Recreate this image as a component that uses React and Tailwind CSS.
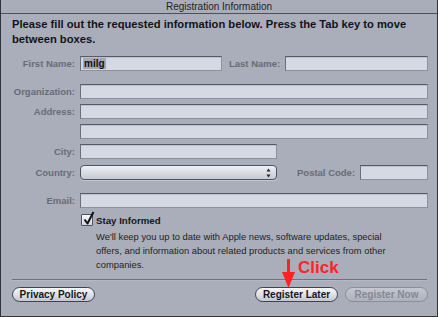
import React from "react";

const inputCls =
  "h-[15px] bg-[#d5d9e4] border border-[#8c909c] border-t-[#555969] border-l-[#6a6e7c] shadow-[inset_0_1px_0_#bcc0cb]";
const labelCls =
  "text-[9.5px] font-bold text-[#686b75] leading-[15px] whitespace-nowrap";

function Label({ children, className = "" }) {
  return <div className={`${labelCls} ${className}`}>{children}</div>;
}

function Row({ label, children, className = "" }) {
  return (
    <div className={`flex items-center ${className}`}>
      <Label className="w-[63px] text-right">{label}</Label>
      <div className="ml-[5px] flex flex-1 items-center">{children}</div>
    </div>
  );
}

export default function App() {
  return (
    <div className="relative w-[438px] h-[317px] overflow-hidden bg-[#aaaebb] border-x border-b border-[#30333d] font-['Liberation_Sans',Arial,sans-serif] text-[#111]">
      {/* title bar */}
      <div className="h-[14px] border-b border-[#4d505b] bg-[#a9adba] flex items-center justify-center text-[10px] leading-[13px] text-[#1e1f24]">
        Registration Information
      </div>

      <div className="pl-[11px] pr-[9px]">
        <div className="mt-[3px] text-[11.2px] font-bold leading-[15px] text-[#121318]">
          Please fill out the requested information below. Press the Tab key to move
          <br />
          between boxes.
        </div>

        {/* first/last name */}
        <div className="mt-[9px] flex items-center">
          <Label className="w-[63px] text-right">First Name:</Label>
          <div className={`${inputCls} ml-[5px] w-[142px] flex items-center pl-[2px]`}>
            <span className="bg-[#a3a8b8] text-[10px] font-bold leading-[11px] px-[1px] text-[#111]">milg</span>
          </div>
          <Label className="ml-[7px]">Last Name:</Label>
          <div className={`${inputCls} ml-[5px] flex-1`} />
        </div>

        <Row label="Organization:" className="mt-[13px]">
          <div className={`${inputCls} flex-1`} />
        </Row>
        <Row label="Address:" className="mt-[5px]">
          <div className={`${inputCls} flex-1`} />
        </Row>
        <Row label="" className="mt-[5px]">
          <div className={`${inputCls} flex-1`} />
        </Row>
        <Row label="City:" className="mt-[5px]">
          <div className={`${inputCls} w-[197px]`} />
        </Row>
        <Row label="Country:" className="mt-[6px]">
          <div className="relative h-[15px] w-[197px] rounded-[4px] border border-[#4f5360] bg-gradient-to-b from-[#eef0f5] via-[#d9dce4] to-[#c6cad4] shadow-[0_1px_0_#c4c7d0]">
            <svg className="absolute right-[5px] top-[2px]" width="5" height="10" viewBox="0 0 5 10">
              <path d="M2.5 0.5 L4.5 3.5 L0.5 3.5 Z" fill="#222" />
              <path d="M0.5 6.5 L4.5 6.5 L2.5 9.5 Z" fill="#222" />
            </svg>
          </div>
          <Label className="ml-[20px]">Postal Code:</Label>
          <div className={`${inputCls} ml-[5px] flex-1`} />
        </Row>
        <Row label="Email:" className="mt-[13px]">
          <div className={`${inputCls} flex-1`} />
        </Row>

        {/* stay informed */}
        <div className="mt-[6px] ml-[69px] flex items-start">
          <div className="relative w-[12px] h-[12px] border border-[#4f535f] bg-gradient-to-b from-[#f7f8fa] to-[#d3d6de] rounded-[1px]">
            <svg className="absolute left-[1px] top-[-4px] overflow-visible" width="12" height="14" viewBox="0 0 12 14">
              <path d="M1.5 8.5 L4.5 12.5 L10.5 1" fill="none" stroke="#111" strokeWidth="2" strokeLinejoin="round" />
            </svg>
          </div>
          <div className="ml-[3px]">
            <div className="text-[9.7px] font-bold leading-[13px] text-[#15161a]">Stay Informed</div>
            <div className="mt-[3px] text-[9.4px] leading-[14px] text-[#1d1e22]">
              We'll keep you up to date with Apple news, software updates, special
              <br />
              offers, and information about related products and services from other
              <br />
              companies.
            </div>
          </div>
        </div>

        <div className="mt-[7px] mr-[1px] h-[2px] border-t border-[#6f727d] border-b border-b-[#b6b9c4]" />

        <div className="mt-[6px] flex items-center">
          <button className="h-[15px] w-[83px] rounded-full border border-[#40434d] bg-gradient-to-b from-[#f5f6f8] via-[#e0e2e8] to-[#c3c6ce] text-[10px] font-bold leading-[13px] text-[#15161a]">
            Privacy Policy
          </button>
          <div className="flex-1" />
          <button className="h-[15px] w-[83px] rounded-full border border-[#40434d] bg-gradient-to-b from-[#f5f6f8] via-[#e0e2e8] to-[#c3c6ce] text-[10px] font-bold leading-[13px] text-[#15161a]">
            Register Later
          </button>
          <button className="ml-[7px] h-[15px] w-[83px] rounded-full border border-[#8b8e98] bg-gradient-to-b from-[#c4c7d0] to-[#aeb1bc] text-[10px] font-bold leading-[13px] text-[#858893]">
            Register Now
          </button>
        </div>
      </div>

      {/* red annotation */}
      <svg className="absolute left-[280px] top-[259px]" width="16" height="30" viewBox="0 0 16 30">
        <rect x="6" y="0" width="3" height="15" fill="#ff2222" />
        <path d="M1 13 L14 13 L7.5 29 Z" fill="#ff2222" />
      </svg>
      <div className="absolute left-[297px] top-[258px] text-[17px] font-bold leading-[20px] text-[#ff2424]">
        Click
      </div>
    </div>
  );
}
